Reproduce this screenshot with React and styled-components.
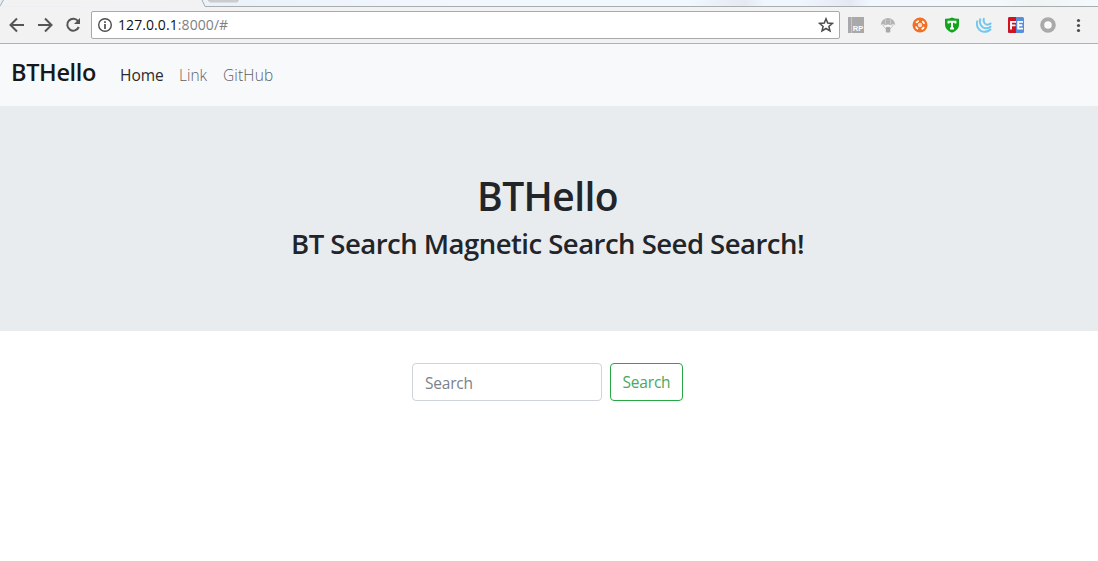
import React from "react";
import styled, { createGlobalStyle } from "styled-components";

const GlobalStyle = createGlobalStyle`
  * { box-sizing: border-box; }
  html, body { margin: 0; height: 100%; overflow: hidden; background: #fff; }
  body { font-family: "Open Sans", "Noto Sans", sans-serif; color: #212529; }
`;

const Page = styled.div`
  display: flex;
  flex-direction: column;
  width: 1098px;
  height: 561px;
`;
const TabStrip = styled.div`
  height: 7px;
  flex: none;
  background: linear-gradient(90deg, #e6eef6 0, #edf3fa 300px, #f1f7fd 450px, #f0f7fe 690px, #e4e9f2 745px, #f0f6fe 765px, #f0f6fe 800px, #e3e8f2 850px, #f1f7fe 870px, #f3f8fc 1000px, #eef4f3 1030px, #f4f9fd 1098px);
  svg { display: block; }
`;
const Toolbar = styled.div`
  height: 37px;
  flex: none;
  display: flex;
  align-items: center;
  background: #f2f2f2;
  border-bottom: 1px solid #b0b1b1;
  padding: 0 11px 0 8px;
`;
const NavIcons = styled.div`
  display: flex;
  gap: 10px;
  width: 83px;
  flex: none;
  svg { display: block; }
`;
const AddressBar = styled.div`
  width: 749px;
  height: 28px;
  flex: none;
  display: flex;
  align-items: center;
  background: #fff;
  border: 1px solid #a9a9a9;
  border-radius: 2px;
  padding: 0 5px;
`;
const Url = styled.span`
  flex: 1;
  margin-left: 5px;
  font-size: 14px;
  line-height: 20px;
  letter-spacing: 0.08px;
  color: #808080;
  b { font-weight: 400; color: #111; }
`;
const Extensions = styled.div`
  display: flex;
  align-items: center;
  gap: 16px;
  margin-left: 8px;
  svg { display: block; flex: none; }
`;
const Navbar = styled.nav`
  height: 62px;
  flex: none;
  display: flex;
  align-items: baseline;
  background: #f8f9fa;
  padding: 10px 10px 0;
`;
const Brand = styled.span`
  width: 110px;
  padding-left: 1px;
  font-size: 23.5px;
  line-height: 37px;
  font-weight: 600;
  letter-spacing: -0.35px;
  color: #16181a;
  white-space: nowrap;
`;
const NavLink = styled.span`
  width: ${(p) => p.$width}px;
  font-size: 15.5px;
  line-height: 24px;
  font-weight: ${(p) => (p.$active ? 400 : 300)};
  letter-spacing: ${(p) => p.$spacing || 0}px;
  color: ${(p) => (p.$active ? "#2a2b2c" : "#5f6061")};
  white-space: nowrap;
`;
const Hero = styled.header`
  height: 225px;
  flex: none;
  display: flex;
  flex-direction: column;
  align-items: center;
  background: #e9ecef;
  padding: 64px 3px 0 0;
`;
const Title = styled.h1`
  margin: 0;
  font-size: 39px;
  line-height: 52px;
  font-weight: 600;
  letter-spacing: -0.6px;
  white-space: nowrap;
`;
const Subtitle = styled.h3`
  margin: 3px 0 0;
  font-size: 27.5px;
  line-height: 38px;
  font-weight: 600;
  letter-spacing: -0.52px;
  white-space: nowrap;
`;
const SearchForm = styled.form`
  display: flex;
  justify-content: center;
  gap: 8px;
  padding: 32px 3px 0 0;
`;
const SearchInput = styled.input`
  width: 190px;
  height: 38px;
  padding: 2px 12px 0;
  border: 1px solid #ced4da;
  border-radius: 4px;
  font: 400 15.5px "Open Sans", sans-serif;
  letter-spacing: -0.2px;
  outline: none;
  &::placeholder { color: #7b8289; opacity: 1; }
`;
const SearchButton = styled.button`
  width: 73px;
  height: 38px;
  padding: 0;
  background: #fff;
  border: 1px solid #28a745;
  border-radius: 4px;
  font: 400 15.5px "Open Sans", sans-serif;
  letter-spacing: -0.2px;
  color: #46a95c;
`;

const stroke = { fill: "none", stroke: "#555", strokeWidth: 2 };

export default function App() {
  return (
    <Page>
      <GlobalStyle />
      <TabStrip>
        <svg width="1098" height="7">
          <path d="M0 7V5L3 0H202L206 6.5H0Z" fill="#f2f2f2" />
          <path d="M0 6L3.500 0M202 0L205 6.500H1098" fill="none" stroke="#a9adb0" />
          <path d="M208 0H238V1Q238 2 236 2H211Q209 2 208 0Z" fill="#d3d5d7" stroke="#b9bbbd" strokeWidth=".7" />
        </svg>
      </TabStrip>
      <Toolbar>
        <NavIcons>
          <svg width="18" height="18" {...stroke}><path d="M16 9H3M9 2.500L2.500 9L9 15.500" /></svg>
          <svg width="18" height="18" {...stroke}><path d="M2 9H15M9 2.500L15.500 9L9 15.500" /></svg>
          <svg width="18" height="18" {...stroke}>
            <path d="M14.200 5.200A6 6 0 1 0 14.800 11" />
            <path d="M16 2V8H10Z" fill="#555" stroke="none" />
          </svg>
        </NavIcons>
        <AddressBar>
          <svg width="16" height="16" fill="none" stroke="#4c4c4c">
            <circle cx="8" cy="8" r="6.300" strokeWidth="1.400" />
            <path d="M8 7V12M8 4.200V5.900" strokeWidth="1.700" />
          </svg>
          <Url><b>127.0.0.1</b>:8000/#</Url>
          <svg width="16" height="16" fill="none" stroke="#4c4c4c" strokeWidth="1.500">
            <path d="M8 1.800L9.700 6L14.400 6.400L10.900 9.400L12 14L8 11.500L4 14L5.100 9.400L1.600 6.400L6.300 6Z" />
          </svg>
        </AddressBar>
        <Extensions>
          <svg width="16" height="16">
            <rect width="16" height="16" fill="#a9a9a9" />
            <path d="M3.500 0V16" stroke="#c6c6c6" />
            <text x="4.800" y="14" fontFamily="Liberation Sans" fontWeight="700" fontSize="7.500" fill="#fff">RP</text>
          </svg>
          <svg width="16" height="16">
            <path d="M.800 8A7.200 7 0 0 1 15.200 8Q13 6.500 11 8.300Q8 6.500 5 8.300Q3 6.500 .8 8Z" fill="#b3b3b3" />
            <path d="M5.500 2V7.500M10.500 2V7.500" stroke="#d2d2d2" strokeWidth=".8" />
            <path d="M2.500 8L6 12M13.500 8L10 12" stroke="#c6c6c6" />
            <rect x="5.800" y="10" width="4.500" height="5.500" rx="1" fill="#a9a9a9" />
          </svg>
          <svg width="16" height="16">
            <circle cx="8" cy="8" r="7.500" fill="#f07025" />
            <circle cx="8" cy="8" r="4.400" fill="none" stroke="#fff" strokeWidth="1.800" strokeDasharray="3.200 3.710" strokeDashoffset="-1.850" />
            <circle cx="8" cy="8" r="2.200" fill="#fff" opacity=".75" />
          </svg>
          <svg width="16" height="16">
            <path d="M1 1.800Q5 2 8 .5Q11 2 15 1.800V8Q15 13 8 15.700Q1 13 1 8Z" fill="#12a51c" />
            <path d="M4.500 6.500V4.800H11.500V6.500M8 4.800V11.200M6 11.500H10" fill="none" stroke="#fff" strokeWidth="1.900" />
          </svg>
          <svg width="16" height="16" fill="none" stroke="#72c7ef" strokeWidth="1.900">
            <path d="M1.500 3.500C-.5 9 3 14.800 8.500 14.800Q12.500 14.800 15 12" />
            <path d="M4.500 1.500C2.500 6 5.500 11.300 10 11.300Q13 11.300 15.200 9.200" />
            <path d="M8 1C6.800 4.500 8.500 7.700 11.500 7.700Q13.500 7.700 15.200 6" />
          </svg>
          <svg width="16" height="16">
            <rect width="16" height="16" rx="1.500" fill="#568ddd" />
            <path d="M1.500 0H8V16H1.500Q0 16 0 14.500V1.500Q0 0 1.500 0Z" fill="#d11320" />
            <path d="M3 12.500V4.900H8M3 8.400H7.500M15 4.900H10.200V11.600H15M10.200 8.300H14.300" fill="none" stroke="#fff" strokeWidth="1.900" />
          </svg>
          <svg width="16" height="16"><circle cx="8" cy="8" r="5.800" fill="#fafafa" stroke="#aaa" strokeWidth="4" /></svg>
          <svg width="14" height="16" fill="#4c4c4c">
            <circle cx="6.500" cy="3.500" r="1.600" /><circle cx="6.500" cy="8.500" r="1.600" /><circle cx="6.500" cy="13.500" r="1.600" />
          </svg>
        </Extensions>
      </Toolbar>
      <Navbar>
        <Brand>BTHello</Brand>
        <NavLink $active $width={59}>Home</NavLink>
        <NavLink $width={44}>Link</NavLink>
        <NavLink $width={60} $spacing={0.15}>GitHub</NavLink>
      </Navbar>
      <Hero>
        <Title>BTHello</Title>
        <Subtitle>BT Search Magnetic Search Seed Search!</Subtitle>
      </Hero>
      <SearchForm onSubmit={(e) => e.preventDefault()}>
        <SearchInput placeholder="Search" />
        <SearchButton>Search</SearchButton>
      </SearchForm>
    </Page>
  );
}
